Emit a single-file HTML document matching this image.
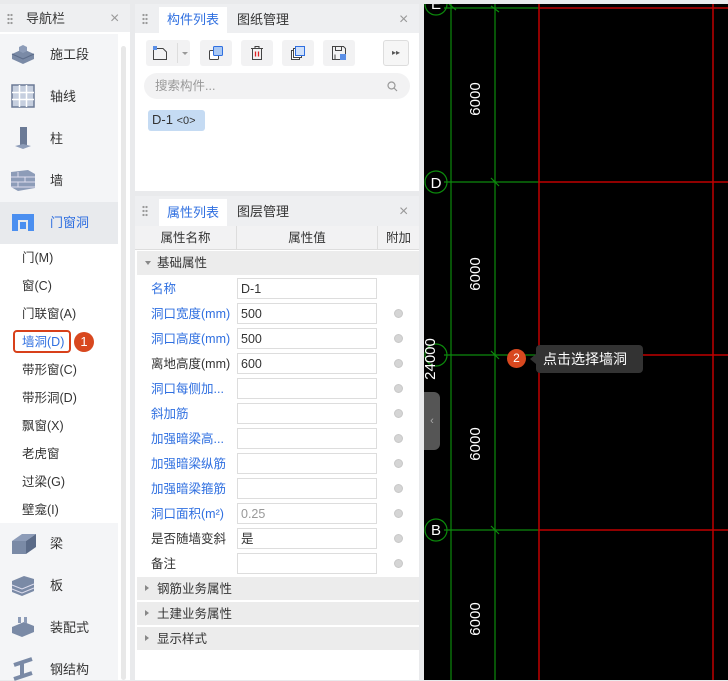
<!DOCTYPE html>
<html><head><meta charset="utf-8"><style>
*{margin:0;padding:0;box-sizing:border-box}
body{width:728px;height:680px;overflow:hidden;background:#e9eaec;font-family:"Liberation Sans","Noto Sans CJK SC",sans-serif;font-size:13px;line-height:16px;color:#333;position:relative}
.abs{position:absolute}
.grip{position:absolute;width:6px;height:12px;background-image:radial-gradient(circle,#999 1px,transparent 1.3px);background-size:3px 4px}
.nav{left:0;top:4px;width:130px;height:676px;background:#fff}
.hdr{background:#eeeff1;height:28px}
.big{position:absolute;left:0;width:118px;height:42px;background:#f4f5f7}
.big span{position:absolute;left:50px;top:13px}
.ico{position:absolute;left:10px;top:8px;width:26px;height:24px}
.sub{position:absolute;left:22px;font-size:12.5px}
.x{position:absolute;font-size:16px;color:#999}
.row{position:absolute;left:137px;width:282px;height:25px}
.row .n{position:absolute;left:14px;top:5px;color:#2f6fe0;font-size:12.5px}
.row .n.k{color:#333}
.row .v{position:absolute;left:100px;top:2px;width:140px;height:21px;border:1px solid #ddd;background:#fff;padding:2px 3px;font-size:12.5px}
.row .r{position:absolute;left:257px;top:8px;width:9px;height:9px;border-radius:50%;background:#d5d5d5;border:1px solid #c8c8c8}
.grp{position:absolute;left:137px;width:282px;height:23px;background:#ececec;font-size:12.5px}
.grp b{font-weight:normal;position:absolute;left:20px;top:4px}
.grp i{position:absolute;left:8px;top:8px;width:0;height:0;border-left:4px solid #888;border-top:3px solid transparent;border-bottom:3px solid transparent}
.tb{position:absolute;top:40px;width:32px;height:26px;background:#f2f2f3;border-radius:3px}
</style></head><body>
<div class="abs nav">
 <div class="hdr"></div>
 <div class="grip" style="left:7px;top:9px"></div>
 <div class="abs" style="left:26px;top:7px;font-size:13px">导航栏</div>
 <div class="x" style="left:110px;top:7px">×</div>
 <div class="abs" style="left:121px;top:42px;width:5px;height:634px;background:#e8e8e8;border-radius:3px"></div>
</div>
<div class="big" style="top:34px"><svg class="ico" viewBox="0 0 26 24"><path d="M2 12 L13 7 L24 12 L24 17 L13 22 L2 17Z" fill="#7a8aa6"/><path d="M2 12 L13 17 L24 12" fill="none" stroke="#5b6b88"/><path d="M9 5 L13 3 L17 5 L17 9 L13 11 L9 9Z" fill="#8d9cb8"/></svg><span>施工段</span></div>
<div class="big" style="top:76px"><svg class="ico" viewBox="0 0 26 24"><rect x="2" y="1" width="22" height="22" fill="#c6cfdf" stroke="#6b7a96" stroke-width="1.5"/><path d="M9.5 1V23M16.5 1V23M2 8.5H24M2 15.5H24" stroke="#fff" stroke-width="1.5"/></svg><span>轴线</span></div>
<div class="big" style="top:118px"><svg class="ico" viewBox="0 0 26 24"><rect x="10" y="1" width="7" height="18" fill="#6b7a96"/><path d="M5 20 L13 18 L21 20 L13 23Z" fill="#8d9cb8"/></svg><span>柱</span></div>
<div class="big" style="top:160px"><svg class="ico" viewBox="0 0 26 24"><path d="M1 4 L18 2 L25 6 L25 20 L8 23 L1 19Z" fill="#8d9cb8"/><path d="M1 9H25M1 14H25M1 19H25M8 4V9M15 9V14M8 14V19" stroke="#dde" stroke-width="1"/></svg><span>墙</span></div>
<div class="big" style="top:202px;background:#e8eaed"><svg class="ico" viewBox="0 0 26 24"><path d="M2 4 L24 4 L24 21 L18 21 L18 10 L8 10 L8 21 L2 21Z" fill="#4b8ff0"/><rect x="10" y="12" width="6" height="7" fill="#4b8ff0"/></svg><span style="color:#2f6fe0">门窗洞</span></div>
<div class="sub" style="top:250px">门(M)</div>
<div class="sub" style="top:278px">窗(C)</div>
<div class="sub" style="top:306px">门联窗(A)</div>
<div class="abs" style="left:13px;top:330px;width:58px;height:23px;border:2.5px solid #d8401a;border-radius:4px;background:#fff"></div>
<div class="sub" style="top:334px;color:#2f6fe0">墙洞(D)</div>
<div class="abs" style="left:74px;top:332px;width:20px;height:20px;border-radius:50%;background:#d8481f;color:#fff;font-size:13px;text-align:center;line-height:20px">1</div>
<div class="sub" style="top:362px">带形窗(C)</div>
<div class="sub" style="top:390px">带形洞(D)</div>
<div class="sub" style="top:418px">飘窗(X)</div>
<div class="sub" style="top:446px">老虎窗</div>
<div class="sub" style="top:474px">过梁(G)</div>
<div class="sub" style="top:502px">壁龛(I)</div>
<div class="big" style="top:523px"><svg class="ico" viewBox="0 0 26 24"><path d="M2 10 L12 3 L26 3 L16 10Z" fill="#8d9cb8"/><path d="M2 10H16V23H2Z" fill="#7a8aa6"/><path d="M16 10 L26 3 L26 16 L16 23Z" fill="#5b6b88"/></svg><span>梁</span></div>
<div class="big" style="top:565px"><svg class="ico" viewBox="0 0 26 24"><path d="M2 8 L14 3 L24 6 L24 18 L12 23 L2 19Z" fill="#7a8aa6"/><path d="M2 12 L12 16 L24 11M2 16 L12 20 L24 15" stroke="#dde" fill="none"/></svg><span>板</span></div>
<div class="big" style="top:607px"><svg class="ico" viewBox="0 0 26 24"><path d="M2 12 L14 7 L24 11 L24 17 L12 22 L2 18Z" fill="#7a8aa6"/><rect x="8" y="2" width="3" height="6" fill="#8d9cb8"/><rect x="14" y="2" width="3" height="6" fill="#8d9cb8"/></svg><span>装配式</span></div>
<div class="big" style="top:649px;height:31px"><svg class="ico" viewBox="0 0 26 24"><path d="M4 8 L22 2 M4 22 L22 16 M12 6 L12 20" stroke="#7a8aa6" stroke-width="4"/></svg><span>钢结构</span></div>

<div class="abs" style="left:135px;top:4px;width:284px;height:187px;background:#fff">
 <div class="hdr" style="height:29px"></div>
 <div class="grip" style="left:7px;top:9px"></div>
 <div class="abs" style="left:24px;top:3px;width:68px;height:26px;background:#fff;color:#2f6fe0;text-align:center;line-height:26px">构件列表</div>
 <div class="abs" style="left:102px;top:8px">图纸管理</div>
 <div class="x" style="left:264px;top:8px">×</div>
</div>
<div class="tb" style="left:146px;width:44px"><svg class="abs" style="left:6px;top:5px" width="16" height="16" viewBox="0 0 16 16"><path d="M1.5 3.5H11L14.5 7V14.5H1.5Z" fill="none" stroke="#444"/><rect x="1" y="1" width="4" height="4" fill="#5b8fe6"/></svg><div class="abs" style="left:31px;top:3px;width:1px;height:20px;background:#ddd"></div><div class="abs" style="left:36px;top:12px;border-left:3px solid transparent;border-right:3px solid transparent;border-top:3px solid #999"></div></div>
<div class="tb" style="left:200px"><svg class="abs" style="left:8px;top:5px" width="16" height="16" viewBox="0 0 16 16"><rect x="1.5" y="5.5" width="9" height="9" rx="1" fill="#fff" stroke="#444"/><rect x="5.5" y="1.5" width="9" height="9" rx="1" fill="#a9c8f4" stroke="#2f6fe0"/></svg></div>
<div class="tb" style="left:241px"><svg class="abs" style="left:8px;top:5px" width="16" height="16" viewBox="0 0 16 16"><path d="M2 3.5H14M6 3.5V1.5H10V3.5M3.5 3.5V14.5H12.5V3.5" fill="none" stroke="#444"/><path d="M6.5 6.5V11.5M9.5 6.5V11.5" stroke="#d22" stroke-width="1.3"/></svg></div>
<div class="tb" style="left:282px"><svg class="abs" style="left:8px;top:5px" width="16" height="16" viewBox="0 0 16 16"><rect x="1.5" y="5.5" width="8" height="9" fill="#fff" stroke="#444"/><rect x="3.5" y="3.5" width="8" height="9" fill="#fff" stroke="#444"/><rect x="5.5" y="1.5" width="9" height="9" fill="#cfe0fa" stroke="#2f6fe0"/></svg></div>
<div class="tb" style="left:323px"><svg class="abs" style="left:8px;top:5px" width="16" height="16" viewBox="0 0 16 16"><path d="M1.5 1.5H12.5L14.5 3.5V14.5H1.5Z" fill="none" stroke="#444"/><path d="M4.5 1.5V5.5H10.5V1.5M4 14.5V9.5" fill="none" stroke="#444"/><rect x="9" y="9" width="6" height="6" fill="#5b8fe6"/></svg></div>
<div class="abs" style="left:383px;top:40px;width:26px;height:26px;border:1px solid #ddd;border-radius:3px;background:#f6f6f6;font-size:8px;color:#555;text-align:center;line-height:24px">▸▸</div>
<div class="abs" style="left:144px;top:73px;width:266px;height:26px;border-radius:13px;background:#f2f2f3;color:#999;padding:5px 11px;font-size:12.5px">搜索构件...</div>
<svg class="abs" style="left:387px;top:81px" width="11" height="11" viewBox="0 0 11 11"><circle cx="4.5" cy="4.5" r="3.5" fill="none" stroke="#999" stroke-width="1.2"/><path d="M7 7L10 10" stroke="#999" stroke-width="1.2"/></svg>
<div class="abs" style="left:148px;top:110px;width:57px;height:21px;background:#c5dbf3;border-radius:3px;padding:2px 4px;font-size:13px">D-1 <span style="font-size:11px">&lt;0&gt;</span></div>

<div class="abs" style="left:135px;top:196px;width:284px;height:484px;background:#fff">
 <div class="hdr" style="height:30px"></div>
 <div class="grip" style="left:7px;top:9px"></div>
 <div class="abs" style="left:24px;top:3px;width:68px;height:27px;background:#fff;color:#2f6fe0;text-align:center;line-height:27px">属性列表</div>
 <div class="abs" style="left:102px;top:8px">图层管理</div>
 <div class="x" style="left:264px;top:8px">×</div>
 <div class="abs" style="left:0;top:30px;width:284px;height:24px;background:#f2f2f3;border-bottom:1px solid #ddd;font-size:12.5px">
  <div class="abs" style="left:0;top:4px;width:101px;text-align:center">属性名称</div>
  <div class="abs" style="left:101px;top:0;width:1px;height:24px;background:#ddd"></div>
  <div class="abs" style="left:102px;top:4px;width:140px;text-align:center">属性值</div>
  <div class="abs" style="left:242px;top:0;width:1px;height:24px;background:#ddd"></div>
  <div class="abs" style="left:243px;top:4px;width:41px;text-align:center">附加</div>
 </div>
</div>
<div class="grp" style="top:251px;height:24px"><i style="border-left:3px solid transparent;border-right:3px solid transparent;border-top:4px solid #888;border-bottom:0;left:8px;top:10px"></i><b>基础属性</b></div>
<div class="row" style="top:276px"><div class="n">名称</div><div class="v">D-1</div></div>
<div class="row" style="top:301px"><div class="n">洞口宽度(mm)</div><div class="v">500</div><div class="r"></div></div>
<div class="row" style="top:326px"><div class="n">洞口高度(mm)</div><div class="v">500</div><div class="r"></div></div>
<div class="row" style="top:351px"><div class="n k">离地高度(mm)</div><div class="v">600</div><div class="r"></div></div>
<div class="row" style="top:376px"><div class="n">洞口每侧加...</div><div class="v"></div><div class="r"></div></div>
<div class="row" style="top:401px"><div class="n">斜加筋</div><div class="v"></div><div class="r"></div></div>
<div class="row" style="top:426px"><div class="n">加强暗梁高...</div><div class="v"></div><div class="r"></div></div>
<div class="row" style="top:451px"><div class="n">加强暗梁纵筋</div><div class="v"></div><div class="r"></div></div>
<div class="row" style="top:476px"><div class="n">加强暗梁箍筋</div><div class="v"></div><div class="r"></div></div>
<div class="row" style="top:501px"><div class="n">洞口面积(m²)</div><div class="v" style="color:#999">0.25</div><div class="r"></div></div>
<div class="row" style="top:526px"><div class="n k">是否随墙变斜</div><div class="v">是</div><div class="r"></div></div>
<div class="row" style="top:551px"><div class="n k">备注</div><div class="v"></div><div class="r"></div></div>
<div class="grp" style="top:577px"><i></i><b>钢筋业务属性</b></div>
<div class="grp" style="top:602px"><i></i><b>土建业务属性</b></div>
<div class="grp" style="top:627px"><i></i><b>显示样式</b></div>

<div class="abs" style="left:424px;top:4px;width:304px;height:676px;background:#000;overflow:hidden">
<svg width="304" height="676" style="position:absolute;left:0;top:0;font-family:'Liberation Sans',sans-serif">
 <g stroke="#0c8a0c" stroke-width="1.2">
  <line x1="27" y1="0" x2="27" y2="676"/><line x1="71" y1="0" x2="71" y2="676"/>
  <line x1="20" y1="4" x2="115" y2="4"/><line x1="20" y1="178" x2="115" y2="178"/><line x1="20" y1="351" x2="115" y2="351"/><line x1="20" y1="526" x2="115" y2="526"/>
  <path d="M25 0L32 6M67 2L75 8M67 174L75 182M67 347L75 355M67 522L75 530"/>
  <circle cx="12" cy="178" r="11" fill="none"/><circle cx="12" cy="351" r="11" fill="none"/><circle cx="12" cy="526" r="11" fill="none"/><circle cx="12" cy="0" r="11" fill="none"/>
 </g>
 <g stroke="#c00000" stroke-width="1.5">
  <line x1="115" y1="0" x2="115" y2="676"/><line x1="289" y1="0" x2="289" y2="676"/>
  <line x1="115" y1="4" x2="304" y2="4"/><line x1="115" y1="178" x2="304" y2="178"/><line x1="115" y1="351" x2="304" y2="351"/><line x1="115" y1="526" x2="304" y2="526"/>
 </g>
 <g fill="#fff" font-size="15">
  <text x="12" y="5" text-anchor="middle">E</text>
  <text x="12" y="184" text-anchor="middle">D</text>
  <text x="12" y="531" text-anchor="middle">B</text>
  <text transform="translate(56,95) rotate(-90)" text-anchor="middle">6000</text>
  <text transform="translate(56,270) rotate(-90)" text-anchor="middle">6000</text>
  <text transform="translate(56,440) rotate(-90)" text-anchor="middle">6000</text>
  <text transform="translate(56,615) rotate(-90)" text-anchor="middle">6000</text>
  <text transform="translate(11,355) rotate(-90)" text-anchor="middle">24000</text>
 </g>
</svg>
<div class="abs" style="left:0;top:388px;width:16px;height:58px;background:#555;border-radius:0 6px 6px 0;color:#aaa;font-size:11px;line-height:58px;text-align:center">‹</div>
<div class="abs" style="left:83px;top:345px;width:19px;height:19px;border-radius:50%;background:#d8481f;color:#fff;font-size:12px;text-align:center;line-height:19px">2</div>
<div class="abs" style="left:106px;top:350px;border-right:6px solid #333;border-top:5px solid transparent;border-bottom:5px solid transparent"></div>
<div class="abs" style="left:112px;top:341px;width:107px;height:28px;background:#333;border-radius:4px;color:#fff;font-size:14px;line-height:18px;padding:5px 7px">点击选择墙洞</div>
</div>
</body></html>
